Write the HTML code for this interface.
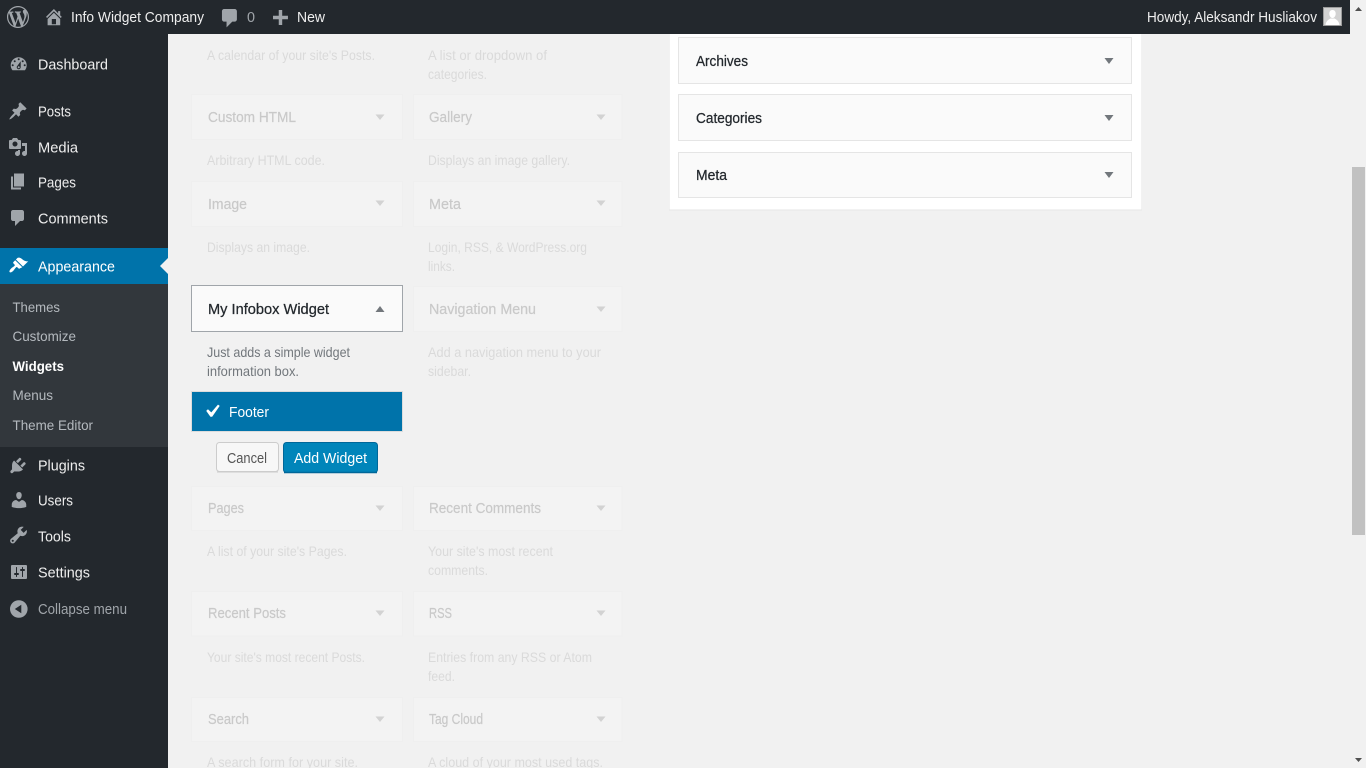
<!DOCTYPE html>
<html lang="en">
<head>
<meta charset="utf-8">
<title>Widgets</title>
<style>
html,body{margin:0;padding:0;width:1366px;height:768px;overflow:hidden;background:#f1f1f1}
svg{display:block;position:absolute;left:0;top:0}
text{font-family:"Liberation Sans",Arial,sans-serif;font-size:14.5px;white-space:pre}
.bar{fill:#eee}
.menu{fill:#eee;font-size:15px}
.sub{fill:#b4b9be;font-size:14px}
.ic{fill:#a0a5aa}
.t{fill:#c9c9c9;stroke:#c9c9c9;stroke-width:.2}
.d{fill:#dadada;font-size:14px}
.tile{fill:#f3f3f3;stroke:#efefef}
.tri{fill:#d2d2d2}
.tri2{fill:#72777c}
.side{fill:#fafafa;stroke:#e5e5e5}
.st{fill:#23282d;stroke:#23282d;stroke-width:.25}
</style>
</head>
<body>
<svg width="1366" height="768" viewBox="0 0 1366 768" xmlns="http://www.w3.org/2000/svg">
<rect width="1366" height="768" fill="#f1f1f1"/>

<!-- widget tiles -->
<text lengthAdjust="spacingAndGlyphs" class="d" x="207" y="60" textLength="168">A calendar of your site's Posts.</text>
<text lengthAdjust="spacingAndGlyphs" class="d" x="428" y="60" textLength="119">A list or dropdown of</text>
<text lengthAdjust="spacingAndGlyphs" class="d" x="428" y="79" textLength="59">categories.</text>

<rect class="tile" x="191.5" y="94.5" width="211" height="45"/>
<rect class="tile" x="413.500" y="94.5" width="208.500" height="45"/>
<text lengthAdjust="spacingAndGlyphs" class="t" x="208" y="122" textLength="88">Custom HTML</text>
<text lengthAdjust="spacingAndGlyphs" class="t" x="429" y="122" textLength="43">Gallery</text>
<path class="tri" d="M375.500 114.500h9l-4.500 5.500zM596.500 114.500h9l-4.500 5.500z"/>
<text lengthAdjust="spacingAndGlyphs" class="d" x="207" y="165" textLength="118">Arbitrary HTML code.</text>
<text lengthAdjust="spacingAndGlyphs" class="d" x="428" y="165" textLength="142">Displays an image gallery.</text>

<rect class="tile" x="191.5" y="181.5" width="211" height="45"/>
<rect class="tile" x="413.500" y="181.5" width="208.500" height="45"/>
<text lengthAdjust="spacingAndGlyphs" class="t" x="208" y="209" textLength="39">Image</text>
<text lengthAdjust="spacingAndGlyphs" class="t" x="429" y="209" textLength="32">Meta</text>
<path class="tri" d="M375.500 200.500h9l-4.500 5.500zM596.500 200.500h9l-4.500 5.500z"/>
<text lengthAdjust="spacingAndGlyphs" class="d" x="207" y="252" textLength="103">Displays an image.</text>
<text lengthAdjust="spacingAndGlyphs" class="d" x="428" y="252" textLength="159">Login, RSS, &amp; WordPress.org</text>
<text lengthAdjust="spacingAndGlyphs" class="d" x="428" y="271" textLength="27">links.</text>

<rect x="191.5" y="285.5" width="211" height="46" fill="#fafafa" stroke="#a0a5aa"/>
<rect class="tile" x="413.500" y="286.5" width="208.500" height="45"/>
<text lengthAdjust="spacingAndGlyphs" class="st" x="208" y="314" textLength="121">My Infobox Widget</text>
<text lengthAdjust="spacingAndGlyphs" class="t" x="429" y="314" textLength="107">Navigation Menu</text>
<path class="tri2" d="M375.500 312h9l-4.500-6z"/>
<path class="tri" d="M596.500 306.500h9l-4.500 5.500z"/>
<text lengthAdjust="spacingAndGlyphs" x="207" y="357" textLength="143" fill="#72777c" style="font-size:14px">Just adds a simple widget</text>
<text lengthAdjust="spacingAndGlyphs" x="207" y="376" textLength="92" fill="#72777c" style="font-size:14px">information box.</text>
<text lengthAdjust="spacingAndGlyphs" class="d" x="428" y="357" textLength="173">Add a navigation menu to your</text>
<text lengthAdjust="spacingAndGlyphs" class="d" x="428" y="376" textLength="43">sidebar.</text>

<rect x="191.5" y="391.5" width="211" height="40" fill="#0073aa" stroke="#dcdcdc"/>
<path fill="#fff" transform="translate(198.700 398.300) scale(1.300)" d="M14.83 4.89l1.34.94-5.81 8.38H9.02L5.78 9.67l1.34-1.25 2.57 2.4z"/>
<text lengthAdjust="spacingAndGlyphs" x="229" y="417" textLength="40" fill="#fff">Footer</text>

<rect x="216.5" y="442.5" width="62" height="29" rx="3" fill="#f7f7f7" stroke="#cccccc"/>
<path d="M217 472h61" stroke="#cccccc" stroke-width="1"/>
<text lengthAdjust="spacingAndGlyphs" x="227" y="463" textLength="40" fill="#555">Cancel</text>
<rect x="283.5" y="442.5" width="94" height="30" rx="3" fill="#0085ba" stroke="#006799"/>
<path d="M284 472.500h93" stroke="#006799" stroke-width="1.400"/>
<text lengthAdjust="spacingAndGlyphs" x="294" y="463" textLength="73" fill="#fff">Add Widget</text>

<rect class="tile" x="191.5" y="486.5" width="211" height="44"/>
<rect class="tile" x="413.500" y="486.5" width="208.500" height="44"/>
<text lengthAdjust="spacingAndGlyphs" class="t" x="208" y="513" textLength="36">Pages</text>
<text lengthAdjust="spacingAndGlyphs" class="t" x="429" y="513" textLength="112">Recent Comments</text>
<path class="tri" d="M375.500 505.500h9l-4.500 5.500zM596.500 505.500h9l-4.500 5.500z"/>
<text lengthAdjust="spacingAndGlyphs" class="d" x="207" y="556" textLength="140">A list of your site's Pages.</text>
<text lengthAdjust="spacingAndGlyphs" class="d" x="428" y="556" textLength="125">Your site's most recent</text>
<text lengthAdjust="spacingAndGlyphs" class="d" x="428" y="575" textLength="60">comments.</text>

<rect class="tile" x="191.5" y="591.5" width="211" height="44.500"/>
<rect class="tile" x="413.500" y="591.5" width="208.500" height="44.500"/>
<text lengthAdjust="spacingAndGlyphs" class="t" x="208" y="618" textLength="78">Recent Posts</text>
<text lengthAdjust="spacingAndGlyphs" class="t" x="429" y="618" textLength="23">RSS</text>
<path class="tri" d="M375.500 610.500h9l-4.500 5.500zM596.500 610.500h9l-4.500 5.500z"/>
<text lengthAdjust="spacingAndGlyphs" class="d" x="207" y="662" textLength="158">Your site's most recent Posts.</text>
<text lengthAdjust="spacingAndGlyphs" class="d" x="428" y="662" textLength="164">Entries from any RSS or Atom</text>
<text lengthAdjust="spacingAndGlyphs" class="d" x="428" y="681" textLength="27">feed.</text>

<rect class="tile" x="191.5" y="697.5" width="211" height="44"/>
<rect class="tile" x="413.500" y="697.5" width="208.500" height="44"/>
<text lengthAdjust="spacingAndGlyphs" class="t" x="208" y="724" textLength="41">Search</text>
<text lengthAdjust="spacingAndGlyphs" class="t" x="429" y="724" textLength="54">Tag Cloud</text>
<path class="tri" d="M375.500 716.500h9l-4.500 5.500zM596.500 716.500h9l-4.500 5.500z"/>
<text lengthAdjust="spacingAndGlyphs" class="d" x="207" y="767" textLength="151">A search form for your site.</text>
<text lengthAdjust="spacingAndGlyphs" class="d" x="428" y="767" textLength="175">A cloud of your most used tags.</text>

<!-- right sidebar panel -->
<rect x="669" y="20" width="473" height="190.500" fill="#e6e6e6"/>
<rect x="669.5" y="20" width="472" height="189.500" fill="#fff"/>
<rect class="side" x="678.5" y="37.5" width="453" height="46"/>
<rect class="side" x="678.5" y="94.5" width="453" height="46"/>
<rect class="side" x="678.5" y="152.5" width="453" height="45"/>
<text lengthAdjust="spacingAndGlyphs" class="st" x="696" y="66" textLength="52">Archives</text>
<text lengthAdjust="spacingAndGlyphs" class="st" x="696" y="123" textLength="66">Categories</text>
<text lengthAdjust="spacingAndGlyphs" class="st" x="696" y="180" textLength="31">Meta</text>
<path class="tri2" d="M1104.500 58h9l-4.500 6zM1104.500 115h9l-4.500 6zM1104.500 172h9l-4.500 6z"/>

<!-- sidebar -->
<rect x="0" y="0" width="168" height="768" fill="#23282d"/>
<rect x="0" y="248" width="168" height="36" fill="#0073aa"/>
<rect x="0" y="284" width="168" height="163" fill="#32373c"/>
<path d="M168 258v16l-8-8z" fill="#f1f1f1"/>

<path class="ic" transform="translate(8.700 54.300)" d="M3.76 16h12.48c1.1-1.37 1.76-3.11 1.76-5 0-4.42-3.58-8-8-8s-8 3.58-8 8c0 1.89.66 3.63 1.76 5zM10 4c.55 0 1 .45 1 1s-.45 1-1 1-1-.45-1-1 .45-1 1-1zM6 6c.55 0 1 .45 1 1s-.45 1-1 1-1-.45-1-1 .45-1 1-1zm8 0c.55 0 1 .45 1 1s-.45 1-1 1-1-.45-1-1 .45-1 1-1zm-5.37 5.55L12 7v6c0 1.1-.9 2-2 2s-2-.9-2-2c0-.57.24-1.08.63-1.45zM4 10c.55 0 1 .45 1 1s-.45 1-1 1-1-.45-1-1 .45-1 1-1zm12 0c.55 0 1 .45 1 1s-.45 1-1 1-1-.45-1-1 .45-1 1-1zm-5 3c0-.55-.45-1-1-1s-1 .45-1 1 .45 1 1 1 1-.45 1-1z"/>
<path class="ic" transform="translate(8 101)" d="M10.44 3.02l1.82-1.82 6.36 6.35-1.83 1.82c-1.05-.68-2.48-.57-3.41.36l-.75.75c-.92.93-1.04 2.35-.35 3.41l-1.83 1.82-2.41-2.41-2.8 2.79c-.42.42-3.38 2.71-3.8 2.29s1.86-3.39 2.28-3.81l2.79-2.79L4.1 9.36l1.83-1.82c1.05.69 2.48.57 3.4-.36l.75-.75c.93-.92 1.05-2.35.36-3.41z"/>
<path class="ic" transform="translate(8 137)" d="M13 11V4c0-.55-.45-1-1-1h-1.67L9 1H5L3.67 3H2c-.55 0-1 .45-1 1v7c0 .55.45 1 1 1h10c.55 0 1-.45 1-1zM7 4.5c1.38 0 2.5 1.12 2.5 2.5S8.38 9.5 7 9.5 4.5 8.38 4.5 7 5.62 4.5 7 4.5zM14 6h5v10.5c0 1.38-1.12 2.5-2.5 2.5S14 17.88 14 16.5s1.12-2.5 2.5-2.5c.17 0 .34.02.5.05V9h-3V6zm-4 8.05V13h2v3.5c0 1.38-1.12 2.5-2.5 2.5S7 17.88 7 16.5 8.12 14 9.5 14c.17 0 .34.02.5.05z"/>
<path class="ic" transform="translate(8 171.500)" d="M6 15V2h10v13H6zm-1 1h8v2H3V5h2v11z"/>
<path class="ic" transform="translate(8 208)" d="M5 2h9c1.1 0 2 .9 2 2v7c0 1.1-.9 2-2 2h-2l-5 5v-5H5c-1.1 0-2-.9-2-2V4c0-1.1.9-2 2-2z"/>
<path fill="#fff" transform="translate(8.500 255.500)" d="M14.48 11.06L7.41 3.99l1.5-1.5c.5-.56 2.3-.47 3.51.32 1.21.8 1.43 1.28 2.91 2.1 1.18.64 2.45 1.26 4.45.85zm-.71.71L6.7 4.7 4.93 6.47c-.39.39-.39 1.02 0 1.41l1.06 1.06c.39.39.39 1.03 0 1.42-.6.6-1.43 1.11-2.21 1.69-.35.26-.7.53-1.01.84-1.34 1.34-2.37 2.96-1.57 3.76.8.8 2.42-.23 3.76-1.57.31-.31.58-.66.85-1.02.57-.78 1.08-1.61 1.69-2.21.39-.39 1.02-.39 1.41 0l1.06 1.06c.39.39 1.02.39 1.41 0z"/>
<path class="ic" transform="translate(8 455.500)" d="M13.11 4.36L9.87 7.6 8 5.73l3.24-3.24c.35-.34 1.05-.2 1.56.32.52.51.66 1.21.31 1.55zm-8 1.77l.91-1.12 9.01 9.01-1.19.84c-.71.71-2.63 1.16-3.82 1.16H6.14L4.9 17.26c-.59.59-1.54.59-2.12 0-.59-.58-.59-1.53 0-2.12l1.24-1.24v-3.88c0-1.13.4-3.19 1.09-3.89zm7.26 3.97l3.24-3.24c.34-.35 1.04-.21 1.55.31.52.51.66 1.21.31 1.55l-3.24 3.25z"/>
<path class="ic" transform="translate(9 490)" d="M10 9.25c-2.27 0-2.73-3.44-2.73-3.44C7 4.02 7.82 2 9.97 2c2.16 0 2.98 2.02 2.71 3.81 0 0-.41 3.44-2.68 3.44zm0 2.57L12.72 10c2.39 0 4.52 2.33 4.52 4.53v2.49s-3.65 1.13-7.24 1.13c-3.65 0-7.24-1.13-7.24-1.13v-2.49c0-2.25 1.94-4.48 4.47-4.48z"/>
<path class="ic" transform="translate(8 524.500) scale(1.050)" d="M16.68 9.77c-1.34 1.34-3.3 1.67-4.95.99l-5.41 6.52c-.99.99-2.59.99-3.58 0s-.99-2.59 0-3.57l6.52-5.42c-.68-1.65-.35-3.61.99-4.95 1.28-1.28 3.12-1.62 4.72-1.06l-2.89 2.89 2.82 2.82 2.86-2.87c.53 1.58.18 3.39-1.08 4.65zM3.81 16.21c.4.39 1.04.39 1.43 0 .4-.4.4-1.04 0-1.43-.39-.4-1.03-.4-1.43 0-.39.39-.39 1.03 0 1.43z"/>
<path class="ic" transform="translate(9 562)" d="M18 16V4c0-.55-.45-1-1-1H3c-.55 0-1 .45-1 1v12c0 .55.45 1 1 1h14c.55 0 1-.45 1-1zM8 11h1c.55 0 1 .45 1 1s-.45 1-1 1H8v1.5c0 .28-.22.5-.5.5s-.5-.22-.5-.5V13H6c-.55 0-1-.45-1-1s.45-1 1-1h1V5.5c0-.28.22-.5.5-.5s.5.22.5.5V11zm5-2h-1c-.55 0-1-.45-1-1s.45-1 1-1h1V5.5c0-.28.22-.5.5-.5s.5.22.5.5V7h1c.55 0 1 .45 1 1s-.45 1-1 1h-1v5.5c0 .28-.22.5-.5.5s-.5-.22-.5-.5V9z"/>
<path class="ic" fill-rule="evenodd" transform="translate(8.800 599.200)" d="M10 1a8.800 8.800 0 1 1 0 17.600 8.800 8.800 0 0 1 0-17.600zM12.500 5.500L6 9.800l6.500 4.300z"/>

<text lengthAdjust="spacingAndGlyphs" class="menu" x="38" y="69.500" textLength="70">Dashboard</text>
<text lengthAdjust="spacingAndGlyphs" class="menu" x="38" y="116.500" textLength="33">Posts</text>
<text lengthAdjust="spacingAndGlyphs" class="menu" x="38" y="152.500" textLength="40">Media</text>
<text lengthAdjust="spacingAndGlyphs" class="menu" x="38" y="187.500" textLength="38">Pages</text>
<text lengthAdjust="spacingAndGlyphs" class="menu" x="38" y="223.500" textLength="70">Comments</text>
<text lengthAdjust="spacingAndGlyphs" x="38" y="271.500" textLength="77" fill="#fff" style="font-size:15px">Appearance</text>
<text lengthAdjust="spacingAndGlyphs" class="sub" x="12.500" y="312" textLength="47.500">Themes</text>
<text lengthAdjust="spacingAndGlyphs" class="sub" x="12.500" y="341" textLength="63.500">Customize</text>
<text lengthAdjust="spacingAndGlyphs" x="12.500" y="371" textLength="51.500" fill="#fff" font-weight="700" style="font-size:14px">Widgets</text>
<text lengthAdjust="spacingAndGlyphs" class="sub" x="12.500" y="400" textLength="40.500">Menus</text>
<text lengthAdjust="spacingAndGlyphs" class="sub" x="12.500" y="430" textLength="80.500">Theme Editor</text>
<text lengthAdjust="spacingAndGlyphs" class="menu" x="38" y="470.500" textLength="47">Plugins</text>
<text lengthAdjust="spacingAndGlyphs" class="menu" x="38" y="505.500" textLength="35">Users</text>
<text lengthAdjust="spacingAndGlyphs" class="menu" x="38" y="541.500" textLength="33">Tools</text>
<text lengthAdjust="spacingAndGlyphs" class="menu" x="38" y="577.500" textLength="52">Settings</text>
<text lengthAdjust="spacingAndGlyphs" x="38" y="614" textLength="89" fill="#a0a5aa">Collapse menu</text>

<!-- admin bar -->
<rect x="0" y="0" width="1350" height="34" fill="#23282d"/>
<path class="ic" transform="translate(7 6) scale(1.100)" d="M20 10c0-5.510-4.490-10-10-10C4.480 0 0 4.490 0 10c0 5.520 4.480 10 10 10 5.510 0 10-4.480 10-10zM7.780 15.370L4.370 6.220c.55-.02 1.170-.08 1.170-.08.5-.06.44-1.130-.06-1.110 0 0-1.450.11-2.370.11-.18 0-.37 0-.58-.01C4.120 2.690 6.870 1.110 10 1.110c2.330 0 4.450.87 6.050 2.340-.68-.11-1.650.39-1.650 1.580 0 .74.45 1.360.9 2.100.35.61.55 1.360.55 2.460 0 1.490-1.400 5-1.400 5l-3.030-8.370c.54-.02.82-.17.82-.17.5-.05.44-1.250-.06-1.220 0 0-1.440.12-2.380.12-.87 0-2.330-.12-2.330-.12-.5-.03-.56 1.200-.06 1.220l.92.08 1.260 3.410zM17.410 10c.24-.64.74-1.870.43-4.250.7 1.290 1.050 2.710 1.050 4.250 0 3.290-1.730 6.240-4.400 7.780.97-2.590 1.940-5.200 2.920-7.780zM6.100 18.090C3.120 16.650 1.110 13.530 1.110 10c0-1.300.23-2.480.72-3.590C3.250 10.300 4.670 14.200 6.100 18.090zm4.030-6.630l2.580 6.980c-.86.29-1.760.45-2.710.45-.79 0-1.570-.11-2.290-.33.81-2.380 1.620-4.740 2.420-7.100z"/>
<path class="ic" transform="translate(43.400 6.400) scale(1.050)" d="M16 8.500l1.530 1.530-1.060 1.060L10 4.620l-6.470 6.470-1.060-1.060L10 2.500l4 4v-2h2v4zm-6-2.460l6 5.990V18H4v-5.970zM12 17v-5H8v5h4z"/>
<text lengthAdjust="spacingAndGlyphs" class="bar" x="71" y="22" textLength="133">Info Widget Company</text>
<path class="ic" transform="translate(218.500 6.700) scale(1.150)" d="M5 2h9c1.100 0 2 .9 2 2v7c0 1.100-.9 2-2 2h-2l-5 5v-5H5c-1.100 0-2-.9-2-2V4c0-1.100.9-2 2-2z"/>
<text lengthAdjust="spacingAndGlyphs" x="247" y="22" textLength="8" fill="#a0a5aa">0</text>
<path class="ic" transform="translate(268.400 7.700) scale(1.150)" d="M17 7v3h-5v5H9v-5H4V7h5V2h3v5h5z"/>
<text lengthAdjust="spacingAndGlyphs" class="bar" x="297" y="22" textLength="28">New</text>
<text lengthAdjust="spacingAndGlyphs" class="bar" x="1147" y="22" textLength="170">Howdy, Aleksandr Husliakov</text>
<rect x="1323.500" y="7.500" width="18" height="18" fill="#d2d2d2" stroke="#9c9c9c" stroke-width="1"/>
<path fill="#fff" d="M1332.500 10c2.200 0 3.200 1.700 3.200 3.700s-1.300 4.300-3.200 4.300-3.200-2.300-3.200-4.300 1-3.700 3.200-3.700zM1325.500 25c.5-4 3-5.500 5-6.500h4c2 1 4.500 2.500 5 6.500z"/>

<!-- scrollbar -->
<rect x="1350" y="0" width="16" height="768" fill="#f1f1f1"/>
<rect x="1352" y="167" width="13" height="368" fill="#c1c1c1"/>
<path d="M1355 11h7l-3.500-4z" fill="#505050"/>
<path d="M1355 758h7l-3.500 4z" fill="#505050"/>
</svg>
</body>
</html>
